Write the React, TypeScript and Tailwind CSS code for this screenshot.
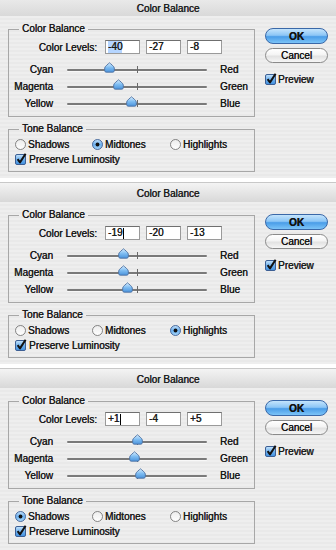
import React from "react";

type Tone = "shadows" | "midtones" | "highlights";

function Thumb({ value }: { value: number }) {
  const left = ((value + 100) / 200) * 140 - 5.5;
  return (
    <svg
      className="absolute top-[1px]"
      style={{ left }}
      width="11"
      height="11"
      viewBox="0 0 11 11"
    >
      <defs>
        <linearGradient id="thumbg" x1="0" y1="0" x2="0" y2="1">
          <stop offset="0" stopColor="#d6ecfd" />
          <stop offset="0.5" stopColor="#7fbdf2" />
          <stop offset="1" stopColor="#4a93dc" />
        </linearGradient>
      </defs>
      <path
        d="M5.5 0.8 C6.5 1.6 10.3 4.6 10.3 6 V8.6 Q10.3 10.2 8.8 10.2 H2.2 Q0.7 10.2 0.7 8.6 V6 C0.7 4.6 4.5 1.6 5.5 0.8 Z"
        fill="url(#thumbg)"
        stroke="#4d6fa0"
        strokeWidth="0.9"
      />
    </svg>
  );
}

function Slider({ left, right, value }: { left: string; right: string; value: number }) {
  return (
    <div className="flex h-[17px] items-center">
      <span className="w-[44px] text-right">{left}</span>
      <div className="relative ml-[14px] h-full w-[140px]">
        <div className="absolute left-0 right-0 top-[8px] h-[2px] rounded-full bg-[#7a7a7a] shadow-[0_1px_0_#f8f8f8]" />
        <div className="absolute left-[70px] top-[5px] h-[7px] w-[1px] bg-[#6a6a6a]" />
        <Thumb value={value} />
      </div>
      <span className="ml-[13px]">{right}</span>
    </div>
  );
}

function CheckBox() {
  return (
    <svg width="12" height="12" viewBox="0 0 12 12" className="shrink-0">
      <defs>
        <linearGradient id="cbg" x1="0" y1="0" x2="0" y2="1">
          <stop offset="0" stopColor="#c9e6fc" />
          <stop offset="0.5" stopColor="#6fb1ee" />
          <stop offset="1" stopColor="#3f8fdf" />
        </linearGradient>
      </defs>
      <rect x="0.5" y="1.5" width="10" height="10" rx="1.5" fill="url(#cbg)" stroke="#3d5f94" />
      <path d="M2.6 6.2 L5 9.4 L10.6 0.8" stroke="#111" strokeWidth="2" fill="none" strokeLinejoin="round" />
    </svg>
  );
}

function Radio({ on }: { on: boolean }) {
  return (
    <svg width="11" height="11" viewBox="0 0 11 11" className="shrink-0">
      <defs>
        <linearGradient id="radon" x1="0" y1="0" x2="0" y2="1">
          <stop offset="0" stopColor="#c5e3fb" />
          <stop offset="0.5" stopColor="#6db0ee" />
          <stop offset="1" stopColor="#a6d6fa" />
        </linearGradient>
        <linearGradient id="radoff" x1="0" y1="0" x2="0" y2="1">
          <stop offset="0" stopColor="#ececec" />
          <stop offset="1" stopColor="#ffffff" />
        </linearGradient>
      </defs>
      <circle cx="5.5" cy="5.5" r="5" fill={on ? "url(#radon)" : "url(#radoff)"} stroke={on ? "#3d5f94" : "#777777"} strokeWidth="0.9" />
      {on && <circle cx="5.5" cy="5.5" r="1.9" fill="#111" />}
    </svg>
  );
}

function Field({ value, mode }: { value: string; mode?: "selected" | "caret" }) {
  return (
    <div className="flex h-[14px] w-[35px] items-center border border-[#9a9a9a] border-t-[#6f6f6f] bg-white pl-[2px] leading-[12px]">
      {mode === "selected" ? (
        <span className="bg-[#b5d5ff]">{value}</span>
      ) : (
        <span>{value}</span>
      )}
      {mode === "caret" && <span className="ml-[1px] h-[11px] w-[1px] bg-black" />}
    </div>
  );
}

function Dialog({
  first,
  values,
  tone,
  mode,
}: {
  first?: boolean;
  values: number[];
  tone: Tone;
  mode: "selected" | "caret";
}) {
  const fmt = (v: number) => (v > 0 ? `+${v}` : `${v}`);
  return (
    <div className="flex flex-col">
      {first ? (
        <div className="flex h-[16px] items-center justify-center bg-gradient-to-b from-[#e9e9e9] to-[#d9d9d9] text-[10px] text-[#1e1e1e]">
          Color Balance
        </div>
      ) : (
        <div className="flex h-[20px] items-center justify-center border-t border-[#c8c8c8] bg-gradient-to-b from-[#f4f4f4] to-[#d8d8d8] pt-[2px] text-[10px] text-[#1e1e1e]">
          Color Balance
        </div>
      )}
      <div className="flex h-[162px] bg-[repeating-linear-gradient(180deg,#eeeeee_0px,#eeeeee_2px,#e9e9e9_2px,#e9e9e9_4px)] pl-[8px] pt-[7px]">
        <div className="flex w-[247px] flex-col">
          <fieldset className="m-0 min-w-0 border border-[#a7a7a7] px-0 pb-[4px]">
            <legend className="ml-[10px] px-[3px] leading-[12px]">Color Balance</legend>
            <div className="mt-[5px] flex h-[14px] items-center">
              <span className="w-[88px] text-right">Color Levels:</span>
              <div className="ml-[8px] flex gap-[6px]">
                <Field value={fmt(values[0])} mode={mode} />
                <Field value={fmt(values[1])} />
                <Field value={fmt(values[2])} />
              </div>
            </div>
            <div className="mt-[7px] flex flex-col">
              <Slider left="Cyan" right="Red" value={values[0]} />
              <Slider left="Magenta" right="Green" value={values[1]} />
              <Slider left="Yellow" right="Blue" value={values[2]} />
            </div>
          </fieldset>
          <fieldset className="m-0 mt-[6px] min-w-0 border border-[#a7a7a7] px-0 pb-[6px]">
            <legend className="ml-[10px] px-[3px] leading-[12px]">Tone Balance</legend>
            <div className="mt-[3px] flex h-[12px] items-center pl-[6px]">
              <div className="flex w-[77px] items-center gap-[2px]">
                <Radio on={tone === "shadows"} />
                <span>Shadows</span>
              </div>
              <div className="flex w-[78px] items-center gap-[2px]">
                <Radio on={tone === "midtones"} />
                <span>Midtones</span>
              </div>
              <div className="flex items-center gap-[2px]">
                <Radio on={tone === "highlights"} />
                <span>Highlights</span>
              </div>
            </div>
            <div className="mt-[3px] flex h-[12px] items-center gap-[2px] pl-[6px]">
              <CheckBox />
              <span>Preserve Luminosity</span>
            </div>
          </fieldset>
        </div>
        <div className="ml-[10px] flex flex-col pt-[5px]">
          <div className="flex h-[16px] w-[63px] items-center justify-center rounded-full border border-[#3a68a8] bg-[linear-gradient(180deg,#c4e4fc_0%,#8cc6f6_45%,#4a9de8_55%,#7cc4f8_100%)] font-bold text-[#111]">
            OK
          </div>
          <div className="mt-[4px] flex h-[15px] w-[63px] items-center justify-center rounded-full border border-[#8a8a8a] bg-[linear-gradient(180deg,#ffffff_0%,#f4f4f4_45%,#e2e2e2_55%,#f6f6f6_100%)] text-[#111]">
            Cancel
          </div>
          <div className="mt-[10px] flex h-[12px] items-center gap-[1px]">
            <CheckBox />
            <span>Preview</span>
          </div>
        </div>
      </div>
    </div>
  );
}

export default function App() {
  return (
    <div className="flex h-[550px] w-[336px] flex-col gap-[4px] overflow-hidden bg-white font-['Liberation_Sans',Arial,sans-serif] text-[10px] text-[#1a1a1a] [text-shadow:0.35px_0_0_#1a1a1a]">
      <Dialog first values={[-40, -27, -8]} tone="midtones" mode="selected" />
      <Dialog values={[-19, -20, -13]} tone="highlights" mode="caret" />
      <Dialog values={[1, -4, 5]} tone="shadows" mode="caret" />
    </div>
  );
}
